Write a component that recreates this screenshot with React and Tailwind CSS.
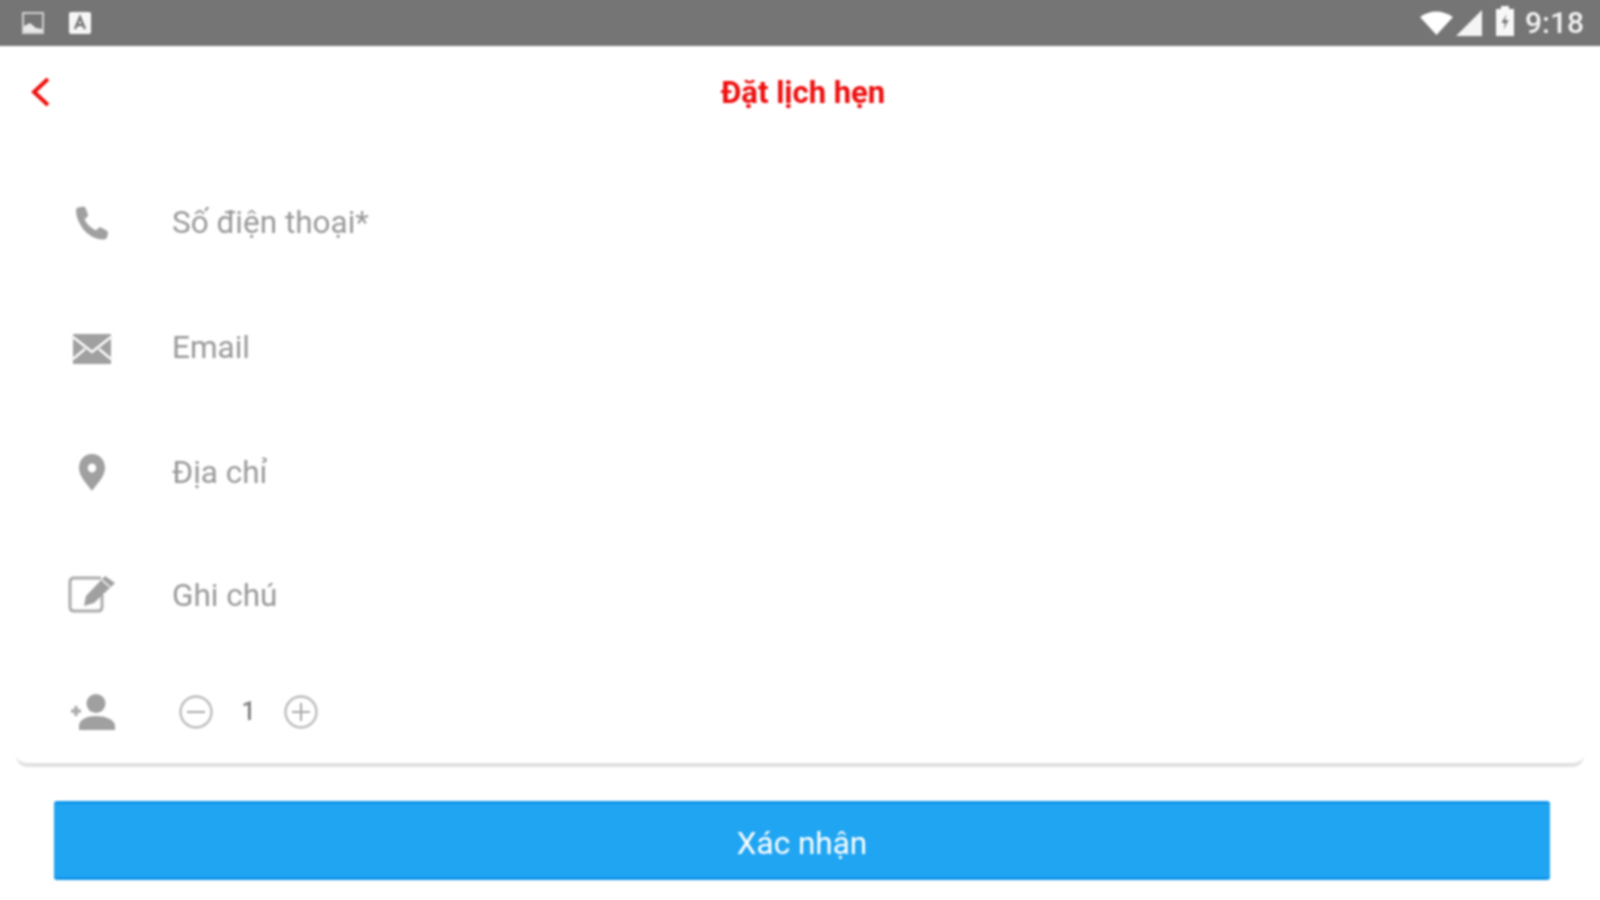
const font = { fontFamily: 'Roboto, "Noto Sans", sans-serif' };

function Phone() {
  return (
    <svg width="34" height="34" viewBox="0 0 34 34" className="block">
      <path d="M3 1.5 L8.5 0.5 Q10 0.5 10.5 2 L13 8.5 Q13.3 10 12 11 L9.5 13 Q12 20 21 24.5 L23.5 22 Q24.5 21 26 21.5 L31.5 24.5 Q33 25.5 33 27 L32 31.5 Q31 33.5 28 33.5 Q16 33 8 23 Q1 13 1 4.5 Q1 2.2 3 1.5 Z" fill="#a0a0a0" />
    </svg>
  );
}
function Mail() {
  return (
    <svg width="38" height="30" viewBox="0 0 38 30" className="mt-[2px] block">
      <rect width="38" height="30" fill="#a0a0a0" />
      <path d="M0 3 L19 18 L38 3 M0 25 L12 15 M38 25 L26 15" stroke="#fff" strokeWidth="2.4" fill="none" />
    </svg>
  );
}
function Pin() {
  return (
    <svg width="26" height="37" viewBox="0 0 28 37" preserveAspectRatio="none" className="block">
      <path fillRule="evenodd" d="M14 0 C6 0 0 6 0 14 C0 23 10 31 14 37 C18 31 28 23 28 14 C28 6 22 0 14 0 Z M14 9.5 A4.5 4.5 0 1 1 14 18.5 A4.5 4.5 0 1 1 14 9.5 Z" fill="#a0a0a0" />
    </svg>
  );
}
function Edit() {
  return (
    <svg width="48" height="38" viewBox="0 0 48 38" className="mb-[4px] block">
      <path d="M33 3 H6 Q2 3 2 7 V32 Q2 36 6 36 H30 Q34 36 34 32 V20" stroke="#acacac" strokeWidth="3" fill="none" />
      <path d="M37 1 L47 8 L26 28 L16 31 L18 21 Z" fill="#a0a0a0" />
      <path d="M34 5 L42 12" stroke="#fff" strokeWidth="1.4" />
    </svg>
  );
}
function PersonAdd() {
  return (
    <svg width="46" height="36" viewBox="0 0 46 36" className="block">
      <circle cx="27" cy="9.5" r="9.5" fill="#a0a0a0" />
      <path d="M10 36 V32 C10 25 19 22 27 22 C35 22 46 25 46 32 V36 Z" fill="#a0a0a0" />
      <path d="M2 17 H12 M7 12 V22" stroke="#acacac" strokeWidth="3.4" />
    </svg>
  );
}
function Stepper({ plus }) {
  return (
    <svg width="34" height="34" viewBox="0 0 34 34" className="block">
      <circle cx="17" cy="17" r="15.5" stroke="#bcbcbc" strokeWidth="2.4" fill="none" />
      <path d="M8 17 H26" stroke="#a8a8a8" strokeWidth="2" />
      {plus && <path d="M17 8 V26" stroke="#a8a8a8" strokeWidth="2" />}
    </svg>
  );
}

function Field({ icon, label, tall = true }) {
  return (
    <div className={tall ? "flex h-[125px] items-center pl-[44px]" : "flex h-[121px] items-center pl-[44px]"}>
      <div className="flex w-[64px] justify-center">{icon}</div>
      <span className="pl-[48px] pt-[1px] text-[31.5px] text-[#999999]">{label}</span>
    </div>
  );
}

export default function App() {
  return (
    <div className="h-[900px] w-[1600px] overflow-hidden bg-white" style={font}>
      <div className="-m-[4px] flex h-[908px] w-[1608px] flex-col bg-white blur-[1px]">
        <div className="flex h-[50px] items-center justify-between bg-[#757575] pl-[26px] pr-[20px] pt-[4px]">
          <div className="flex items-center gap-[25px]">
            <svg width="22" height="22" viewBox="0 0 22 22" className="block">
              <rect x="1" y="1" width="20" height="20" fill="none" stroke="#d0d0d0" strokeWidth="2" />
              <path d="M2 20 L2 14 L8 11 L14 16 L20 17 L20 20 Z" fill="#e8e8e8" />
            </svg>
            <svg width="22" height="22" viewBox="0 0 22 22" className="block">
              <rect width="22" height="22" rx="2" fill="#f6f6f6" />
              <path d="M6 17 L11 5 L16 17 M8 13 H14" stroke="#757575" strokeWidth="2.4" fill="none" />
            </svg>
          </div>
          <div className="flex items-center">
            <svg width="33" height="24" viewBox="0 0 33 24" className="block">
              <path d="M0 6 Q16 -5 33 6 L16.5 24 Z" fill="#ffffff" />
            </svg>
            <svg width="26" height="26" viewBox="0 0 26 26" className="ml-[3px] block">
              <path d="M26 0 V26 H0 Z" fill="#f4f4f4" />
            </svg>
            <svg width="20" height="30" viewBox="0 0 20 30" className="ml-[13px] mb-[4px] block">
              <path d="M6 0 H14 V3 H19 V30 H1 V3 H6 Z" fill="#f8f8f8" />
              <path d="M11.5 8 L6.5 17 H10 L8.5 24 L13.5 14 H10 Z" fill="#757575" />
            </svg>
            <span className="ml-[10px] text-[30px] font-medium leading-none text-[#f2f2f2]">9:18</span>
          </div>
        </div>

        <div className="flex flex-1 flex-col px-[4px]">
          <div className="relative flex h-[92px] items-center justify-center">
            <svg width="20" height="30" viewBox="0 0 20 30" className="absolute left-[31px] top-[31px] block">
              <path d="M17 2 L3 15 L17 28" stroke="#f01010" strokeWidth="4" fill="none" />
            </svg>
            <span className="pl-[6px] pt-[3px] text-[31px] font-bold text-[#ee0f0f]">Đặt lịch hẹn</span>
          </div>

          <div className="mx-[16px] mt-[22px] rounded-b-[12px] border-b-[4px] border-[#e0e0e0]">
            <Field icon={<Phone />} label="Số điện thoại*" />
            <Field icon={<Mail />} label="Email" />
            <Field icon={<Pin />} label="Địa chỉ" />
            <Field icon={<Edit />} label="Ghi chú" tall={false} />
            <div className="flex h-[107px] items-center pl-[44px] pt-[5px]">
              <div className="flex w-[64px] justify-center"><PersonAdd /></div>
              <div className="flex items-center pl-[55px]">
                <Stepper />
                <span className="w-[71px] text-center text-[25px] font-medium text-[#808080]">1</span>
                <Stepper plus />
              </div>
            </div>
          </div>

          <button className="ml-[54px] mr-[50px] mt-[34px] h-[79px] rounded-[3px] border-y-[3px] border-[#1095ea] bg-[#20a5f2] pt-[6px] text-[31.5px] text-white">
            Xác nhận
          </button>
        </div>
      </div>
    </div>
  );
}
